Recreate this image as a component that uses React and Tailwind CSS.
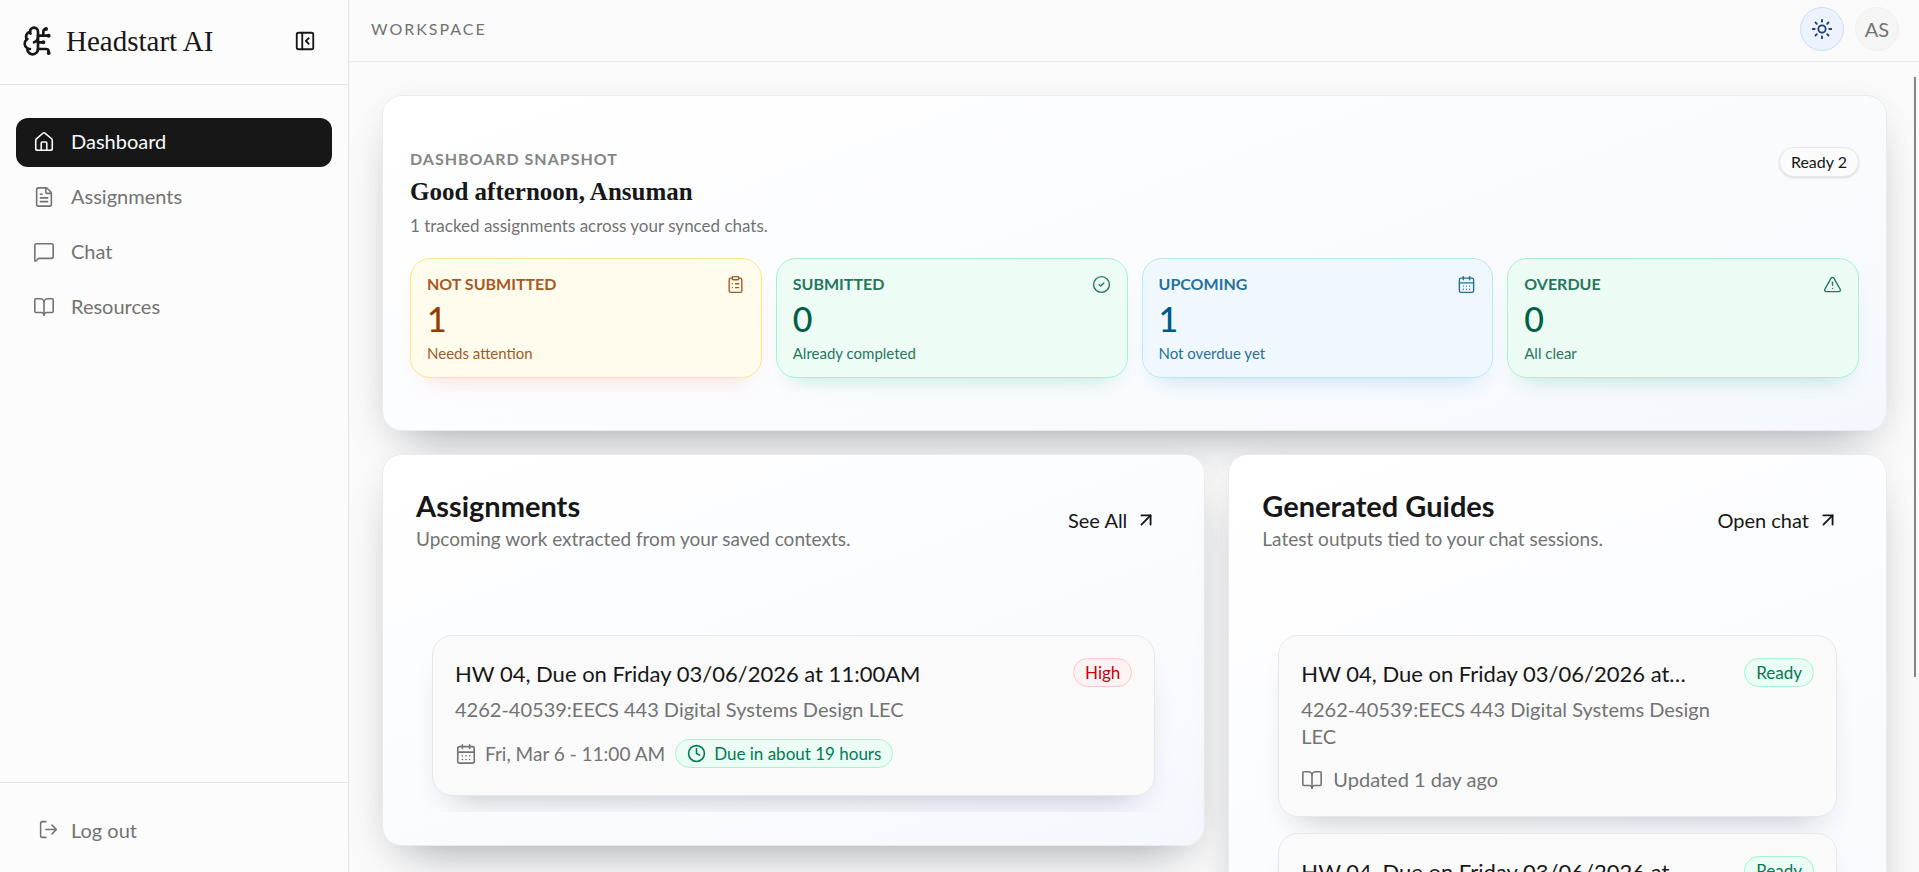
import {
  ArrowUpRight,
  BookOpen,
  BrainCircuit,
  CalendarDays,
  CircleCheck,
  ClipboardList,
  Clock,
  FileText,
  House,
  LogOut,
  MessageSquare,
  PanelLeftClose,
  Sun,
  TriangleAlert,
} from 'lucide-react'

const NAV_ITEMS = [
  { label: 'Dashboard', icon: House, active: true },
  { label: 'Assignments', icon: FileText },
  { label: 'Chat', icon: MessageSquare },
  { label: 'Resources', icon: BookOpen },
]

const STATS = [
  {
    label: 'NOT SUBMITTED',
    value: 1,
    hint: 'Needs attention',
    icon: ClipboardList,
    card: 'border-[#fee685] bg-[#fffcee] shadow-[0_14px_24px_-16px_rgba(234,88,12,0.25)]',
    text: 'text-[#973c00]',
  },
  {
    label: 'SUBMITTED',
    value: 0,
    hint: 'Already completed',
    icon: CircleCheck,
    card: 'border-[#a4f4cf] bg-[#edfdf6] shadow-[0_14px_24px_-16px_rgba(5,150,105,0.3)]',
    text: 'text-[#006045]',
  },
  {
    label: 'UPCOMING',
    value: 1,
    hint: 'Not overdue yet',
    icon: CalendarDays,
    card: 'border-[#b8e6fe] bg-[#f0f8ff] shadow-[0_14px_24px_-16px_rgba(2,132,199,0.3)]',
    text: 'text-[#00598a]',
  },
  {
    label: 'OVERDUE',
    value: 0,
    hint: 'All clear',
    icon: TriangleAlert,
    card: 'border-[#a4f4cf] bg-[#ecfcf5] shadow-[0_14px_24px_-16px_rgba(5,150,105,0.3)]',
    text: 'text-[#006045]',
  },
]

const GUIDES = [
  { id: 1, title: 'HW 04, Due on Friday 03/06/2026 at 11:00AM', course: '4262-40539:EECS 443 Digital Systems Design LEC', updated: 'Updated 1 day ago' },
  { id: 2, title: 'HW 04, Due on Friday 03/06/2026 at 11:00AM', course: '4262-40539:EECS 443 Digital Systems Design LEC', updated: 'Updated 1 day ago' },
]

const PANEL =
  'rounded-[20px] border border-[#ebebeb] bg-linear-160 from-white via-[#fbfcff] to-[#f4f8fe] shadow-[0_24px_48px_-24px_rgba(15,23,42,0.4),0_4px_28px_rgba(0,0,0,0.04)]'

const ITEM_CARD =
  'rounded-[20px] border border-[#e8e8e8] bg-[#fafafb] shadow-[0_18px_32px_-20px_rgba(15,23,42,0.3)]'

function Sidebar() {
  return (
    <aside className="flex w-[349px] shrink-0 flex-col border-r border-[#e3e3e3] bg-[#fcfcfc]">
      <div className="flex h-[85px] items-center border-b border-[#e3e3e3] pr-8 pb-[2px] pl-[22px]">
        <BrainCircuit size={32} className="text-[#171717]" />
        <span className="ml-3 flex-1 font-['Liberation_Serif',serif] text-[29px] leading-[36px] text-[#171717]">
          Headstart AI
        </span>
        <button type="button" aria-label="Collapse sidebar" className="text-[#171717]">
          <PanelLeftClose size={22} />
        </button>
      </div>

      <nav className="flex flex-1 flex-col gap-[6px] px-4 pt-[33px]">
        {NAV_ITEMS.map(({ label, icon: Icon, active }) => (
          <a
            key={label}
            href="#"
            className={`flex h-[49px] items-center gap-4 rounded-xl px-[17px] pb-[2px] text-[20px] leading-[29px] ${
              active ? 'bg-[#171717] text-[#fafafa]' : 'text-[#737373]'
            }`}
          >
            <Icon size={22} strokeWidth={1.75} />
            {label}
          </a>
        ))}
      </nav>

      <div className="flex h-[90px] items-center border-t border-[#e3e3e3] pt-1 pl-[38px]">
        <button type="button" className="flex items-center gap-3 text-[20px] text-[#737373]">
          <LogOut size={21} strokeWidth={1.75} />
          Log out
        </button>
      </div>
    </aside>
  )
}

function TopBar() {
  return (
    <header className="flex h-[62px] shrink-0 items-center justify-between border-b border-[#ebebeb] pr-5 pb-1 pl-[22px]">
      <span className="text-base tracking-[2px] text-[#737373]">WORKSPACE</span>
      <div className="flex items-center gap-[11px]">
        <button
          type="button"
          aria-label="Toggle theme"
          className="flex size-11 items-center justify-center rounded-full border border-[#cfdcf5] bg-[#edf2ff] text-[#1c3d7c]"
        >
          <Sun size={22} />
        </button>
        <button type="button" className="size-11 rounded-full border border-[#f0f0f0] bg-[#f5f5f5] text-[20px] text-[#737373]">
          AS
        </button>
      </div>
    </header>
  )
}

function StatCard({ label, value, hint, icon: Icon, card, text }) {
  return (
    <div className={`flex h-[120px] flex-col rounded-[20px] border px-4 pt-[14px] ${card} ${text}`}>
      <div className="flex h-[22px] items-center justify-between opacity-85">
        <span className="text-base font-bold">{label}</span>
        <Icon size={19} strokeWidth={1.75} />
      </div>
      <div className="mt-1 text-[34px] leading-[40px] font-medium">{value}</div>
      <div className="mt-1 text-[15px] leading-[20px] opacity-85">{hint}</div>
    </div>
  )
}

function Snapshot() {
  return (
    <section className={`${PANEL} px-[27px] pt-[51px] pb-[52px]`}>
      <div className="flex items-start justify-between">
        <div>
          <p className="text-base leading-[24px] font-bold tracking-[1px] text-[#858585]">DASHBOARD SNAPSHOT</p>
          <h1 className="mt-1 font-['Liberation_Serif',serif] text-[25px] leading-[34px] font-bold text-[#171717]">
            Good afternoon, Ansuman
          </h1>
          <p className="mt-[6px] text-[17px] leading-[22px] text-[#737373]">
            1 tracked assignments across your synced chats.
          </p>
        </div>
        <span className="rounded-full border border-[#e8e8e8] bg-[#fbfbfb] px-[11px] text-base leading-[28px] text-[#171717] shadow-sm">
          Ready 2
        </span>
      </div>
      <div className="mt-[21px] grid grid-cols-4 gap-[14px]">
        {STATS.map((stat) => (
          <StatCard key={stat.label} {...stat} />
        ))}
      </div>
    </section>
  )
}

function PanelHeader({ title, subtitle, action }) {
  return (
    <div className="flex items-center justify-between pr-[14px]">
      <div>
        <h2 className="text-[29px] leading-[34px] font-bold text-[#171717]">{title}</h2>
        <p className="text-[19px] leading-[32px] text-[#737373]">{subtitle}</p>
      </div>
      <a href="#" className="flex items-center gap-2 pb-1 text-[20px] leading-[24px] text-[#171717]">
        {action}
        <ArrowUpRight size={22} />
      </a>
    </div>
  )
}

function ReadyBadge() {
  return (
    <span className="shrink-0 rounded-full border border-[#a4f4cf] bg-[#ecfdf5] px-[11px] text-[17px] leading-[27px] text-[#007a55]">
      Ready
    </span>
  )
}

function AssignmentsPanel() {
  return (
    <section className={`${PANEL} px-[33px] pt-[34px] pb-[33px]`}>
      <PanelHeader title="Assignments" subtitle="Upcoming work extracted from your saved contexts." action="See All" />
      <div className="mt-16 overflow-hidden p-4">
        <article className={`${ITEM_CARD} px-[22px] pt-[22px] pb-[27px]`}>
          <div className="flex items-start justify-between">
            <h3 className="text-[22px] leading-[32px] text-[#171717]">HW 04, Due on Friday 03/06/2026 at 11:00AM</h3>
            <span className="rounded-full border border-[#ffc9c9] bg-[#fef2f2] px-[11px] text-[17px] leading-[27px] text-[#c10007]">
              High
            </span>
          </div>
          <p className="mt-[6px] text-[20px] leading-[27px] text-[#737373]">
            4262-40539:EECS 443 Digital Systems Design LEC
          </p>
          <div className="mt-4 flex items-center gap-[10px] text-[19px] leading-[27px] text-[#737373]">
            <span className="flex items-center gap-2">
              <CalendarDays size={22} strokeWidth={1.75} />
              Fri, Mar 6 - 11:00 AM
            </span>
            <span className="flex items-center gap-2 rounded-full border border-[#a4f4cf] bg-[#ecfdf5] px-[11px] text-[17px] leading-[27px] text-[#007a55]">
              <Clock size={19} />
              Due in about 19 hours
            </span>
          </div>
        </article>
      </div>
    </section>
  )
}

function GuidesPanel() {
  return (
    <section className={`${PANEL} px-[33px] pt-[34px] pb-[33px]`}>
      <PanelHeader title="Generated Guides" subtitle="Latest outputs tied to your chat sessions." action="Open chat" />
      <div className="mt-16 flex flex-col gap-4 overflow-hidden p-4">
        {GUIDES.map((guide) => (
          <article key={guide.id} className={`${ITEM_CARD} px-[22px] pt-[22px] pb-[23px]`}>
            <div className="flex items-start justify-between gap-8">
              <div className="min-w-0">
                <h3 className="line-clamp-1 text-[22px] leading-[32px] text-[#171717]">{guide.title}</h3>
                <p className="mt-[6px] text-[20px] leading-[27px] text-[#737373]">{guide.course}</p>
              </div>
              <ReadyBadge />
            </div>
            <p className="mt-4 flex items-center gap-[10px] text-[20px] leading-[27px] text-[#737373]">
              <BookOpen size={22} strokeWidth={1.75} />
              {guide.updated}
            </p>
          </article>
        ))}
      </div>
    </section>
  )
}

export default function App() {
  return (
    <div className="flex h-screen overflow-hidden bg-[#fafafa] font-[Lato,sans-serif]">
      <Sidebar />
      <div className="relative flex min-w-0 flex-1 flex-col">
        <TopBar />
        <main className="flex-1 overflow-hidden pt-[33px] pr-8 pl-[33px]">
          <Snapshot />
          <div className="mt-[23px] grid grid-cols-[minmax(0,5fr)_minmax(0,4fr)] items-start gap-[23px]">
            <AssignmentsPanel />
            <GuidesPanel />
          </div>
        </main>
        {/* Scroll thumb */}
        <div className="absolute top-[77px] right-[3px] h-[600px] w-[2px] bg-[#858585]" />
      </div>
    </div>
  )
}
